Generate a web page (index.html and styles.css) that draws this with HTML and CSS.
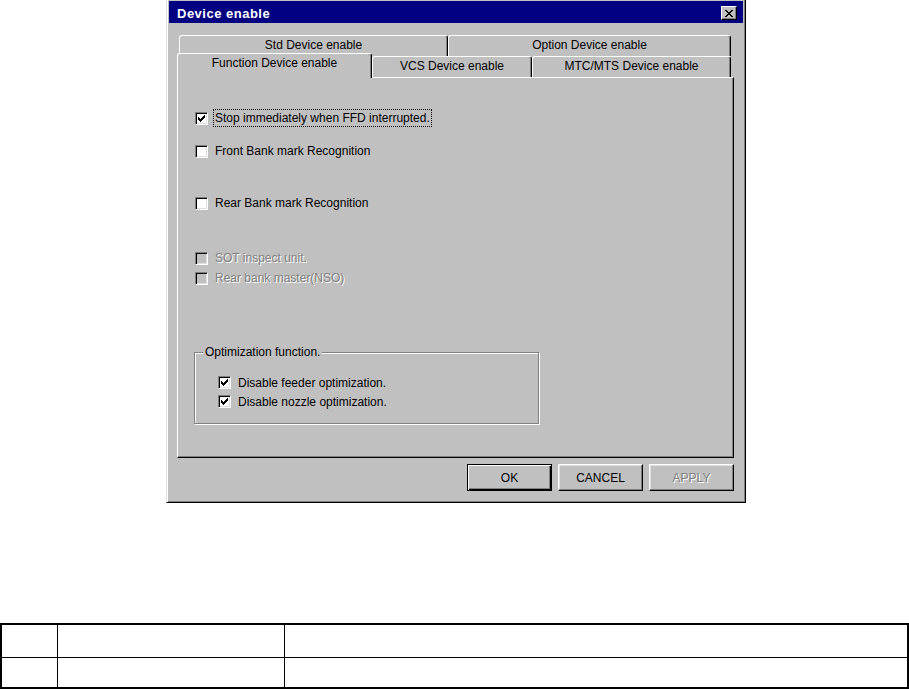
FILE: index.html
```html
<!DOCTYPE html>
<html>
<head>
<meta charset="utf-8">
<title>Device enable</title>
<link rel="stylesheet" href="styles.css">
</head>
<body>
<div class="dialog">
  <div class="titlebar">
    <span class="title">Device enable</span>
    <span class="close"><svg width="8" height="7" viewBox="0 0 8 7" shape-rendering="crispEdges"><path d="M0 0h2v1h-2zM6 0h2v1h-2zM1 1h2v1h-2zM5 1h2v1h-2zM2 2h4v1h-4zM3 3h2v1h-2zM2 4h4v1h-4zM1 5h2v1h-2zM5 5h2v1h-2zM0 6h2v1h-2zM6 6h2v1h-2z" fill="#000"/></svg></span>
  </div>
  <div class="tabs">
    <div class="tabrow back">
      <div class="tab std">Std Device enable</div>
      <div class="tab opt">Option Device enable</div>
    </div>
    <div class="tabrow front">
      <div class="tab sel fn">Function Device enable</div>
      <div class="tab vcs">VCS Device enable</div>
      <div class="tab mtc">MTC/MTS Device enable</div>
    </div>
  </div>
  <div class="panel">
    <div class="cb"><span class="box"><svg class="check" width="9" height="9" viewBox="0 0 9 9" shape-rendering="crispEdges"><path d="M7 1h1v1h-1zM6 2h2v1h-2zM1 3h1v1h-1zM5 3h3v1h-3zM1 4h2v1h-2zM4 4h3v1h-3zM1 5h5v1h-5zM2 6h3v1h-3zM3 7h1v1h-1z" fill="#000"/></svg></span><span class="lbl focus">Stop immediately when FFD interrupted.</span></div>
    <div class="cb r2"><span class="box"></span><span class="lbl">Front Bank mark Recognition</span></div>
    <div class="cb r3"><span class="box"></span><span class="lbl">Rear Bank mark Recognition</span></div>
    <div class="cb r4 dis"><span class="box"></span><span class="lbl">SOT inspect unit.</span></div>
    <div class="cb dis"><span class="box"></span><span class="lbl">Rear bank master(NSO)</span></div>
    <div class="group">
      <span class="legend">Optimization function.</span>
      <div class="cb gcb"><span class="box"><svg class="check" width="9" height="9" viewBox="0 0 9 9" shape-rendering="crispEdges"><path d="M7 1h1v1h-1zM6 2h2v1h-2zM1 3h1v1h-1zM5 3h3v1h-3zM1 4h2v1h-2zM4 4h3v1h-3zM1 5h5v1h-5zM2 6h3v1h-3zM3 7h1v1h-1z" fill="#000"/></svg></span><span class="lbl">Disable feeder optimization.</span></div>
      <div class="cb gcb"><span class="box"><svg class="check" width="9" height="9" viewBox="0 0 9 9" shape-rendering="crispEdges"><path d="M7 1h1v1h-1zM6 2h2v1h-2zM1 3h1v1h-1zM5 3h3v1h-3zM1 4h2v1h-2zM4 4h3v1h-3zM1 5h5v1h-5zM2 6h3v1h-3zM3 7h1v1h-1z" fill="#000"/></svg></span><span class="lbl">Disable nozzle optimization.</span></div>
    </div>
  </div>
  <div class="buttons">
    <div class="btn default">OK</div>
    <div class="btn">CANCEL</div>
    <div class="btn disabled">APPLY</div>
  </div>
</div>
<div class="grid">
  <div class="c c1 top"></div>
  <div class="c c2 top"></div>
  <div class="c c3 top"></div>
  <div class="c c1"></div>
  <div class="c c2"></div>
  <div class="c c3"></div>
</div>
</body>
</html>
```
FILE: styles.css
```css
html, body {
  margin: 0;
  padding: 0;
  background: #fff;
}
body {
  font-family: "Liberation Sans", Arial, sans-serif;
  font-size: 12px;
  color: #000;
}
.dialog {
  box-sizing: border-box;
  width: 580px;
  height: 505px;
  margin: -2px 0 0 166px;
  background: #c0c0c0;
  border: 1px solid;
  border-color: #dfdfdf #000 #000 #dfdfdf;
  box-shadow: inset 1px 1px #fff, inset -1px -1px #808080;
  padding: 2px;
}
.titlebar {
  height: 22px;
  background: #000080;
  color: #fff;
  display: flex;
  justify-content: space-between;
  align-items: flex-start;
  padding-left: 8px;
}
.title {
  font-weight: bold;
  font-size: 13px;
  letter-spacing: 0.5px;
  line-height: 19px;
  padding-top: 3px;
}
.close {
  box-sizing: border-box;
  width: 16px;
  height: 14px;
  margin: 5px 6px 0 0;
  background: #c0c0c0;
  border: 1px solid;
  border-color: #fff #000 #000 #fff;
  box-shadow: inset -1px -1px #808080;
  display: flex;
  align-items: center;
  justify-content: center;
}
.close svg { display: block; }
.tabs {
  margin: 12px 9px 0 8px;
}
.tabrow { display: flex; }
.back {
  height: 18px;
  padding-left: 2px;
}
.front {
  height: 24px;
  align-items: flex-end;
}
.tab {
  position: relative;
  box-sizing: border-box;
  flex: none;
  height: 21px;
  background: #c0c0c0;
  border-left: 1px solid #fff;
  border-top: 1px solid #fff;
  border-right: 1px solid #000;
  box-shadow: inset -1px 0 #808080;
  border-radius: 3px 3px 0 0;
  text-align: center;
  padding-top: 2px;
  line-height: 14px;
  white-space: nowrap;
}
.std { width: 269px; }
.opt { width: 283px; }
.fn { width: 195px; }
.vcs { width: 160px; }
.mtc { width: 199px; }
.sel {
  height: 25px;
  margin-bottom: -1px;
  z-index: 1;
}
.panel {
  box-sizing: border-box;
  height: 381px;
  margin: 0 9px 0 8px;
  border: 1px solid;
  border-color: #fff #000 #000 #fff;
  box-shadow: inset -1px -1px #808080;
  padding: 30px 0 0 17px;
}
.cb {
  display: flex;
  align-items: center;
  height: 20px;
}
.box {
  box-sizing: border-box;
  flex: none;
  width: 13px;
  height: 13px;
  padding: 1px;
  background: #fff;
  border: 1px solid;
  border-color: #808080 #fff #fff #808080;
  box-shadow: inset 1px 1px #000, inset -1px -1px #dfdfdf;
}
.check { display: block; }
.lbl {
  margin-left: 5px;
  padding: 0 2px;
  line-height: 14px;
  white-space: nowrap;
}
.focus {
  border: 1px dotted #000;
  padding: 1px 1px;
}
.r2 { margin-top: 13px; }
.r3 { margin-top: 32px; }
.r4 { margin-top: 35px; }
.dis .box { background: #c0c0c0; }
.dis .lbl {
  color: #808080;
  text-shadow: 1px 1px 0 #fff;
}
.group {
  position: relative;
  box-sizing: border-box;
  width: 345px;
  height: 72px;
  margin: 64px 0 0 -1px;
  border: 1px solid #808080;
  box-shadow: 1px 1px 0 #fff, inset 1px 1px 0 #fff;
  padding: 20px 0 0 23px;
}
.legend {
  position: absolute;
  left: 8px;
  top: -8px;
  background: #c0c0c0;
  padding: 0 2px;
  line-height: 14px;
  white-space: nowrap;
}
.gcb { height: 19px; }
.buttons {
  display: flex;
  justify-content: flex-end;
  gap: 6px;
  margin: 6px 9px 0 0;
}
.btn {
  box-sizing: border-box;
  width: 85px;
  height: 27px;
  border: 1px solid;
  border-color: #fff #000 #000 #fff;
  box-shadow: inset -1px -1px #808080, inset 1px 1px #dfdfdf;
  display: flex;
  align-items: center;
  justify-content: center;
}
.default {
  border: 1px solid #000;
  box-shadow: inset 1px 1px #fff, inset -1px -1px #000, inset -2px -2px #808080;
}
.disabled {
  color: #808080;
  text-shadow: 1px 1px 0 #fff;
}
.grid {
  box-sizing: border-box;
  width: 909px;
  margin-top: 120px;
  display: grid;
  grid-template-columns: 56px 227px 1fr;
  grid-template-rows: 33px 29px;
  border: 2px solid #000;
}
.c {
  box-sizing: border-box;
  border-right: 1px solid #000;
}
.c3 { border-right: 0; }
.top { border-bottom: 1px solid #000; }
```
